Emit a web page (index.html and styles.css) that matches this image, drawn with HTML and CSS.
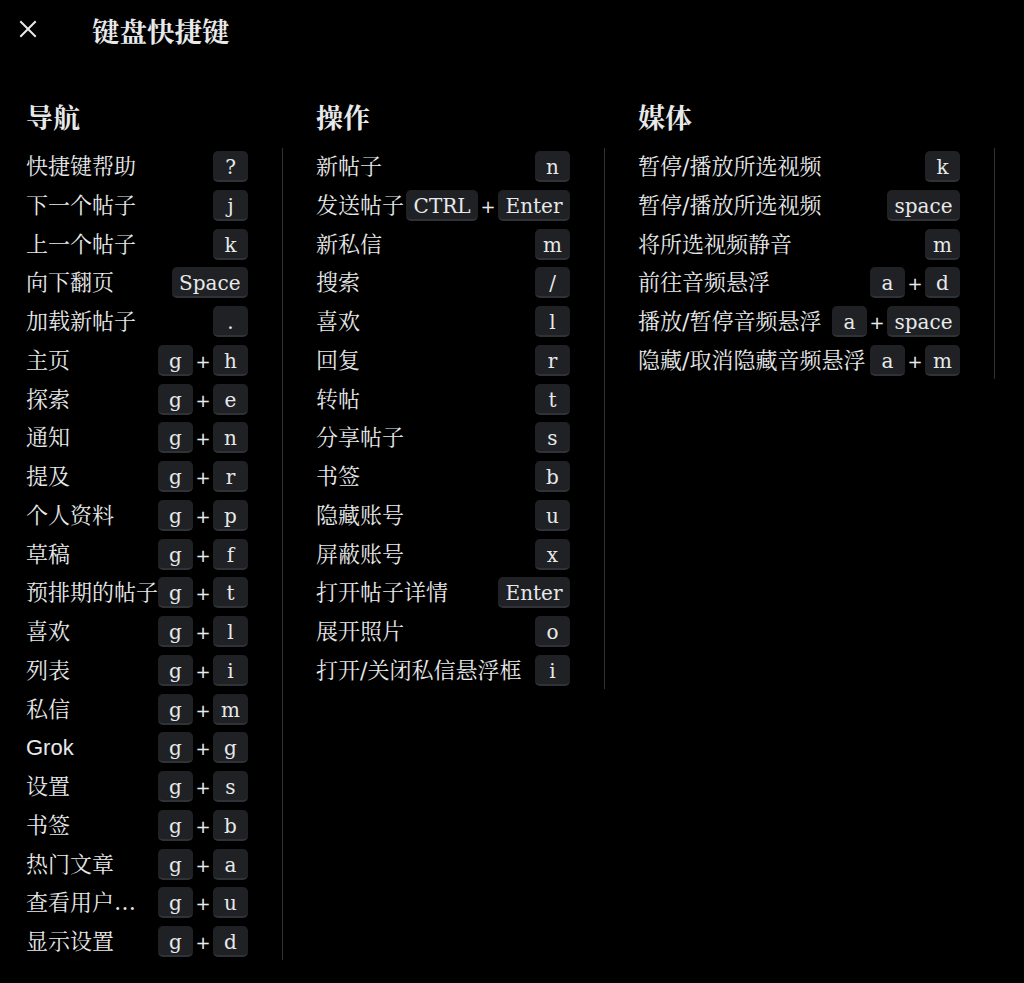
FILE: index.html
```html
<!DOCTYPE html>
<html lang="zh-CN">
<head>
<meta charset="utf-8">
<title>键盘快捷键</title>
<link rel="stylesheet" href="styles.css">
</head>
<body>
<header class="topbar">
  <button class="close" aria-label="关闭">
    <svg width="18" height="18" viewBox="0 0 18 18"><path d="M2 2 L16 16 M16 2 L2 16" stroke="#e7e9ea" stroke-width="2" stroke-linecap="square" fill="none"/></svg>
  </button>
  <h1 class="title">键盘快捷键</h1>
</header>
<main class="columns">
  <section class="col col-nav">
    <h2 class="col-title">导航</h2>
    <ul class="list">
      <li class="row"><span class="label">快捷键帮助</span><span class="keys"><kbd class="key">?</kbd></span></li>
      <li class="row"><span class="label">下一个帖子</span><span class="keys"><kbd class="key">j</kbd></span></li>
      <li class="row"><span class="label">上一个帖子</span><span class="keys"><kbd class="key">k</kbd></span></li>
      <li class="row"><span class="label">向下翻页</span><span class="keys"><kbd class="key">Space</kbd></span></li>
      <li class="row"><span class="label">加载新帖子</span><span class="keys"><kbd class="key">.</kbd></span></li>
      <li class="row"><span class="label">主页</span><span class="keys"><kbd class="key">g</kbd><span class="plus">+</span><kbd class="key">h</kbd></span></li>
      <li class="row"><span class="label">探索</span><span class="keys"><kbd class="key">g</kbd><span class="plus">+</span><kbd class="key">e</kbd></span></li>
      <li class="row"><span class="label">通知</span><span class="keys"><kbd class="key">g</kbd><span class="plus">+</span><kbd class="key">n</kbd></span></li>
      <li class="row"><span class="label">提及</span><span class="keys"><kbd class="key">g</kbd><span class="plus">+</span><kbd class="key">r</kbd></span></li>
      <li class="row"><span class="label">个人资料</span><span class="keys"><kbd class="key">g</kbd><span class="plus">+</span><kbd class="key">p</kbd></span></li>
      <li class="row"><span class="label">草稿</span><span class="keys"><kbd class="key">g</kbd><span class="plus">+</span><kbd class="key">f</kbd></span></li>
      <li class="row"><span class="label">预排期的帖子</span><span class="keys"><kbd class="key">g</kbd><span class="plus">+</span><kbd class="key">t</kbd></span></li>
      <li class="row"><span class="label">喜欢</span><span class="keys"><kbd class="key">g</kbd><span class="plus">+</span><kbd class="key">l</kbd></span></li>
      <li class="row"><span class="label">列表</span><span class="keys"><kbd class="key">g</kbd><span class="plus">+</span><kbd class="key">i</kbd></span></li>
      <li class="row"><span class="label">私信</span><span class="keys"><kbd class="key">g</kbd><span class="plus">+</span><kbd class="key">m</kbd></span></li>
      <li class="row"><span class="label label-sans">Grok</span><span class="keys"><kbd class="key">g</kbd><span class="plus">+</span><kbd class="key">g</kbd></span></li>
      <li class="row"><span class="label">设置</span><span class="keys"><kbd class="key">g</kbd><span class="plus">+</span><kbd class="key">s</kbd></span></li>
      <li class="row"><span class="label">书签</span><span class="keys"><kbd class="key">g</kbd><span class="plus">+</span><kbd class="key">b</kbd></span></li>
      <li class="row"><span class="label">热门文章</span><span class="keys"><kbd class="key">g</kbd><span class="plus">+</span><kbd class="key">a</kbd></span></li>
      <li class="row"><span class="label">查看用户…</span><span class="keys"><kbd class="key">g</kbd><span class="plus">+</span><kbd class="key">u</kbd></span></li>
      <li class="row"><span class="label">显示设置</span><span class="keys"><kbd class="key">g</kbd><span class="plus">+</span><kbd class="key">d</kbd></span></li>
    </ul>
  </section>
  <section class="col col-actions">
    <h2 class="col-title">操作</h2>
    <ul class="list">
      <li class="row"><span class="label">新帖子</span><span class="keys"><kbd class="key">n</kbd></span></li>
      <li class="row"><span class="label">发送帖子</span><span class="keys"><kbd class="key">CTRL</kbd><span class="plus">+</span><kbd class="key">Enter</kbd></span></li>
      <li class="row"><span class="label">新私信</span><span class="keys"><kbd class="key">m</kbd></span></li>
      <li class="row"><span class="label">搜索</span><span class="keys"><kbd class="key">/</kbd></span></li>
      <li class="row"><span class="label">喜欢</span><span class="keys"><kbd class="key">l</kbd></span></li>
      <li class="row"><span class="label">回复</span><span class="keys"><kbd class="key">r</kbd></span></li>
      <li class="row"><span class="label">转帖</span><span class="keys"><kbd class="key">t</kbd></span></li>
      <li class="row"><span class="label">分享帖子</span><span class="keys"><kbd class="key">s</kbd></span></li>
      <li class="row"><span class="label">书签</span><span class="keys"><kbd class="key">b</kbd></span></li>
      <li class="row"><span class="label">隐藏账号</span><span class="keys"><kbd class="key">u</kbd></span></li>
      <li class="row"><span class="label">屏蔽账号</span><span class="keys"><kbd class="key">x</kbd></span></li>
      <li class="row"><span class="label">打开帖子详情</span><span class="keys"><kbd class="key">Enter</kbd></span></li>
      <li class="row"><span class="label">展开照片</span><span class="keys"><kbd class="key">o</kbd></span></li>
      <li class="row"><span class="label">打开/关闭私信悬浮框</span><span class="keys"><kbd class="key">i</kbd></span></li>
    </ul>
  </section>
  <section class="col col-media">
    <h2 class="col-title">媒体</h2>
    <ul class="list">
      <li class="row"><span class="label">暂停/播放所选视频</span><span class="keys"><kbd class="key">k</kbd></span></li>
      <li class="row"><span class="label">暂停/播放所选视频</span><span class="keys"><kbd class="key">space</kbd></span></li>
      <li class="row"><span class="label">将所选视频静音</span><span class="keys"><kbd class="key">m</kbd></span></li>
      <li class="row"><span class="label">前往音频悬浮</span><span class="keys"><kbd class="key">a</kbd><span class="plus">+</span><kbd class="key">d</kbd></span></li>
      <li class="row"><span class="label">播放/暂停音频悬浮</span><span class="keys"><kbd class="key">a</kbd><span class="plus">+</span><kbd class="key">space</kbd></span></li>
      <li class="row"><span class="label">隐藏/取消隐藏音频悬浮</span><span class="keys"><kbd class="key">a</kbd><span class="plus">+</span><kbd class="key">m</kbd></span></li>
    </ul>
  </section>
</main>
</body>
</html>
```

FILE: styles.css
```css
* {
  box-sizing: border-box;
}

html, body {
  margin: 0;
  padding: 0;
  background: #000;
}

body {
  color: #e7e9ea;
  font-family: "DejaVu Serif", "Noto Serif CJK SC", "Noto Sans CJK SC", serif;
  width: 1024px;
  height: 983px;
  overflow: hidden;
}

.topbar {
  display: flex;
  align-items: center;
  height: 60px;
  padding-left: 8px;
}

.close {
  width: 40px;
  height: 40px;
  display: flex;
  align-items: center;
  justify-content: center;
  background: none;
  border: 0;
  padding: 0;
  margin-top: -3px;
}

.title {
  margin: 0 0 0 44px;
  font-family: "Noto Serif CJK SC", "Noto Sans CJK SC", sans-serif;
  font-size: 27.5px;
  font-weight: 700;
  line-height: 32px;
  letter-spacing: 0;
}

.columns {
  display: flex;
  align-items: flex-start;
  gap: 33px;
  padding-left: 26px;
  margin-top: 41px;
}

.col-title {
  margin: 0 0 15px;
  font-family: "Noto Serif CJK SC", "Noto Sans CJK SC", sans-serif;
  font-size: 27px;
  font-weight: 700;
  line-height: 32px;
}

.list {
  list-style: none;
  margin: 0;
  padding: 3px 34px 3px 0;
  border-right: 1px solid #2f3336;
  display: flex;
  flex-direction: column;
  gap: 7.75px;
}

.col-nav .list { width: 257px; }
.col-actions .list { width: 289px; }
.col-media .list { width: 357px; }

.row {
  display: flex;
  align-items: center;
  justify-content: space-between;
  height: 31px;
}

.label {
  font-size: 22px;
  line-height: 31px;
  white-space: nowrap;
}

.label-sans {
  font-family: "Liberation Sans", Arial, sans-serif;
  font-size: 22px;
}

.keys {
  display: flex;
  align-items: center;
  gap: 2px;
  flex-shrink: 0;
}

.key {
  display: inline-flex;
  align-items: center;
  justify-content: center;
  min-width: 35px;
  height: 31px;
  padding: 3px 7.5px 0;
  background: #1f2125;
  border-radius: 5px;
  border-bottom: 2px solid #2f3236;
  font-family: "DejaVu Serif", serif;
  font-size: 20px;
  line-height: 26px;
  color: #e7e9ea;
}

.plus {
  font-family: "DejaVu Sans", sans-serif;
  font-size: 18px;
  line-height: 31px;
  width: 16px;
  text-align: center;
  padding-top: 2px;
}
```
